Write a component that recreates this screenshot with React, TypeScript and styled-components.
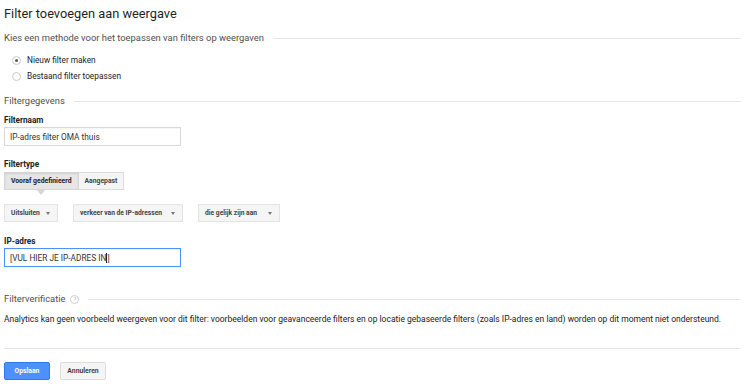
import styled, { createGlobalStyle } from "styled-components";

const GlobalStyle = createGlobalStyle`
  body {
    margin: 0;
    background: #fff;
    font-family: Roboto, "Liberation Sans", Arial, sans-serif;
    color: #333;
  }
`;

const Page = styled.div`
  padding: 4px 9px 0 4px;
`;

const Form = styled.div`
  display: flex;
  flex-direction: column;
`;

const Title = styled.h1`
  margin: 0 0 7px 0;
  font-size: 12.8px;
  line-height: 20px;
  font-weight: 400;
  color: #1f1f1f;
`;

const SectionHeader = styled.div<{ $mt?: number }>`
  display: flex;
  align-items: center;
  gap: 9px;
  margin-top: ${(p) => p.$mt ?? 0}px;
  font-size: 9.4px;
  line-height: 14px;
  color: #505050;

  &::after {
    content: "";
    flex: 1;
    border-top: 1px solid #e5e5e5;
  }
`;

const RadioList = styled.div`
  margin-top: 7px;
  display: flex;
  flex-direction: column;
`;

const RadioRow = styled.label`
  display: flex;
  align-items: center;
  gap: 6px;
  height: 16px;
  padding-left: 8px;
  font-size: 8.3px;
  color: #222;
`;

const RadioDot = styled.span<{ $checked?: boolean }>`
  width: 7px;
  height: 7px;
  border-radius: 50%;
  border: 1px solid #c8c8c8;
  display: flex;
  align-items: center;
  justify-content: center;

  &::after {
    content: "";
    width: 3px;
    height: 3px;
    border-radius: 50%;
    background: ${(p) => (p.$checked ? "#555" : "transparent")};
  }
`;

const FieldLabel = styled.div<{ $mt: number }>`
  margin-top: ${(p) => p.$mt}px;
  font-size: 8.2px;
  line-height: 14px;
  font-weight: 700;
  color: #222;
`;

const TextInput = styled.div<{ $focused?: boolean }>`
  box-sizing: border-box;
  width: 177px;
  height: 19px;
  border: 1px solid ${(p) => (p.$focused ? "#4d90fe" : "#d9d9d9")};
  box-shadow: inset 0 1px 1px rgba(0, 0, 0, 0.04);
  padding: 0 5px;
  display: flex;
  align-items: center;
  font-size: 8.3px;
  color: #333;
`;

const Cursor = styled.span`
  display: inline-block;
  width: 1px;
  height: 10px;
  background: #222;
`;

const Segmented = styled.div`
  position: relative;
  margin-top: 1px;
  display: inline-flex;
  align-self: flex-start;
`;

const SegButton = styled.div<{ $active?: boolean }>`
  box-sizing: border-box;
  height: 18px;
  padding: 0 6px;
  display: flex;
  align-items: center;
  font-size: 6.8px;
  font-weight: 700;
  color: ${(p) => (p.$active ? "#222" : "#444")};
  background: ${(p) => (p.$active ? "#e6e6e6" : "#f5f5f5")};
  border: 1px solid ${(p) => (p.$active ? "#d6d6d6" : "#dcdcdc")};
  box-shadow: ${(p) => (p.$active ? "inset 0 1px 2px rgba(0,0,0,0.1)" : "none")};
  & + & {
    border-left: none;
  }
`;

const Caret = styled.span`
  position: absolute;
  left: 33px;
  top: 18px;
  width: 0;
  height: 0;
  border-left: 4px solid transparent;
  border-right: 4px solid transparent;
  border-top: 5px solid #d6d6d6;
`;

const DropRow = styled.div`
  margin-top: 14px;
  display: flex;
  gap: 15px;
`;

const Dropdown = styled.div<{ $w: number }>`
  box-sizing: border-box;
  width: ${(p) => p.$w}px;
  height: 18px;
  padding: 0 7px 0 6px;
  display: flex;
  align-items: center;
  justify-content: space-between;
  background: #f5f5f5;
  border: 1px solid #e3e3e3;
  font-size: 6.7px;
  font-weight: 700;
  color: #444;
  white-space: nowrap;

  &::after {
    content: "";
    border-left: 2.5px solid transparent;
    border-right: 2.5px solid transparent;
    border-top: 3px solid #777;
  }
`;

const HelpIcon = styled.span`
  box-sizing: border-box;
  width: 9px;
  height: 9px;
  border: 1px solid #d0d0d0;
  border-radius: 50%;
  display: inline-flex;
  align-items: center;
  justify-content: center;
  font-size: 6px;
  line-height: 1;
  color: #b0b0b0;
  margin-left: -4px;
`;

const Paragraph = styled.p`
  margin: 6px 0 0 0;
  font-size: 8.5px;
  line-height: 14px;
  color: #222;
`;

const Divider = styled.hr`
  margin: 22px 0 0 0;
  border: none;
  border-top: 1px solid #e5e5e5;
`;

const Actions = styled.div`
  margin-top: 13px;
  display: flex;
  gap: 10px;
`;

const Button = styled.button<{ $primary?: boolean }>`
  box-sizing: border-box;
  width: 46px;
  height: 18px;
  padding: 0;
  font-family: inherit;
  font-size: 6.8px;
  font-weight: 700;
  border-radius: 2px;
  color: ${(p) => (p.$primary ? "#fff" : "#444")};
  background: ${(p) => (p.$primary ? "#4d90fe" : "#f5f5f5")};
  border: 1px solid ${(p) => (p.$primary ? "#3079ed" : "#dcdcdc")};
`;

export default function App() {
  return (
    <>
      <GlobalStyle />
      <Page>
        <Form>
          <Title>Filter toevoegen aan weergave</Title>
          <SectionHeader>Kies een methode voor het toepassen van filters op weergaven</SectionHeader>
          <RadioList>
            <RadioRow>
              <RadioDot $checked />
              Nieuw filter maken
            </RadioRow>
            <RadioRow>
              <RadioDot />
              Bestaand filter toepassen
            </RadioRow>
          </RadioList>
          <SectionHeader $mt={10}>Filtergegevens</SectionHeader>
          <FieldLabel $mt={5}>Filternaam</FieldLabel>
          <TextInput>IP-adres filter OMA thuis</TextInput>
          <FieldLabel $mt={11}>Filtertype</FieldLabel>
          <Segmented>
            <SegButton $active>Vooraf gedefinieerd</SegButton>
            <SegButton>Aangepast</SegButton>
            <Caret />
          </Segmented>
          <DropRow>
            <Dropdown $w={54}>Uitsluiten</Dropdown>
            <Dropdown $w={110}>verkeer van de IP-adressen</Dropdown>
            <Dropdown $w={82}>die gelijk zijn aan</Dropdown>
          </DropRow>
          <FieldLabel $mt={12}>IP-adres</FieldLabel>
          <TextInput $focused>
            [VUL HIER JE IP-ADRES IN
            <Cursor />]
          </TextInput>
          <SectionHeader $mt={25}>
            Filterverificatie <HelpIcon>?</HelpIcon>
          </SectionHeader>
          <Paragraph>
            Analytics kan geen voorbeeld weergeven voor dit filter: voorbeelden voor geavanceerde filters en op
            locatie gebaseerde filters (zoals IP-adres en land) worden op dit moment niet ondersteund.
          </Paragraph>
          <Divider />
          <Actions>
            <Button $primary>Opslaan</Button>
            <Button>Annuleren</Button>
          </Actions>
        </Form>
      </Page>
    </>
  );
}
